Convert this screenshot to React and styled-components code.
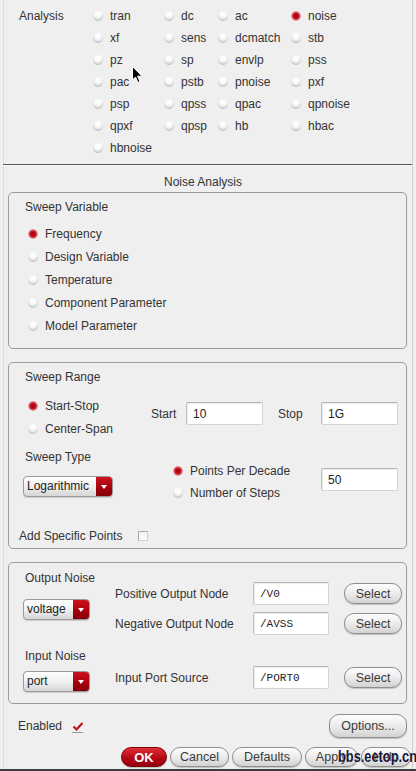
import React from "react";
import styled, { createGlobalStyle, css } from "styled-components";

const Global = createGlobalStyle`
  html, body { margin: 0; padding: 0; background: #efefef; }
  body { font-family: "Liberation Sans", Arial, sans-serif; }
`;

const Window = styled.div`
  position: relative;
  width: 416px;
  height: 771px;
  box-sizing: border-box;
  background: #efefef;
  padding: 0 3px;
  display: flex;
  border-bottom: 2px solid #3c3c3c;
  overflow: hidden;
  color: #333;
  font-size: 12px;
`;

const Frame = styled.div`
  flex: 1;
  border-left: 1px solid #dcdcdc;
  border-right: 1px solid #cfcfcf;
  padding: 0 5px 0 4px;
  display: flex;
  flex-direction: column;
`;

const AnalysisSection = styled.div`
  display: flex;
  padding-top: 5px;
`;

const SectionLabel = styled.div`
  width: 74px;
  margin-left: 11px;
  line-height: 22px;
`;

const RadioGrid = styled.div`
  display: grid;
  grid-template-columns: 71px 54px 73px auto;
  grid-auto-rows: 22px;
`;

const RadioDot = styled.span`
  flex: none;
  width: 10px;
  height: 10px;
  border-radius: 50%;
  box-sizing: border-box;
  ${(p) =>
    p.$checked
      ? css`
          background: radial-gradient(circle at 50% 50%, #a8000c 0, #b80612 30%, #d2404c 50%, #efc6ca 72%, #c4c4c4 100%);
        `
      : css`
          background: radial-gradient(circle at 50% 30%, #ffffff 0, #f8f8f8 38%, #e0e0e0 60%, #b0b0b0 84%, #969696 100%);
        `}
`;

const Option = styled.label`
  display: flex;
  align-items: center;
  gap: 7px;
  height: ${(p) => p.$h || 22}px;
  white-space: nowrap;
  line-height: 16px;
`;

const Divider = styled.div`
  margin: 5px -5px 0 -5px;
  height: 1px;
  background: #555;
  border-bottom: 1px solid #fafafa;
`;

const Title = styled.div`
  margin-top: 8px;
  line-height: 16px;
  text-align: center;
  padding-right: 9px;
`;

const Group = styled.div`
  margin-top: ${(p) => p.$mt}px;
  border: 1px solid #9c9c9c;
  border-radius: 5px;
  padding: ${(p) => p.$pt || 6}px 0 ${(p) => p.$pb}px 16px;
`;

const Legend = styled.div`
  line-height: 16px;
`;

const RadioList = styled.div`
  display: flex;
  flex-direction: column;
  margin-top: ${(p) => p.$mt || 0}px;
  padding-left: ${(p) => p.$pl || 0}px;
  width: ${(p) => (p.$w ? `${p.$w}px` : "auto")};
`;

const RangeRow = styled.div`
  display: flex;
  align-items: flex-start;
  margin-top: 9px;
`;

const RangeRadios = styled.div`
  width: 126px;
  padding-left: 3px;
  box-sizing: border-box;
`;

const FieldGroup = styled.div`
  display: flex;
  align-items: center;
  margin-top: 8px;
`;

const FieldLabel = styled.span`
  width: ${(p) => p.$w}px;
  margin-left: ${(p) => p.$ml || 0}px;
  line-height: 16px;
  white-space: nowrap;
`;

const TextInput = styled.div`
  box-sizing: border-box;
  width: ${(p) => p.$w || 77}px;
  height: 23px;
  margin-top: ${(p) => p.$mt || 0}px;
  background: #fff;
  border: 1px solid #d4d4d4;
  border-top-color: #b4b4b4;
  border-left-color: #c2c2c2;
  border-radius: 2px;
  box-shadow: inset 1px 1px 1px rgba(0, 0, 0, 0.08);
  padding: 0 6px;
  display: flex;
  align-items: center;
  color: #222;
  font-size: ${(p) => (p.$mono ? 11 : 12)}px;
  font-family: ${(p) =>
    p.$mono ? '"Liberation Mono", "Courier New", monospace' : '"Liberation Sans", Arial, sans-serif'};
`;

const TypeRow = styled.div`
  display: flex;
  align-items: flex-start;
  margin-top: 9px;
`;

const TypeLeft = styled.div`
  width: 148px;
  display: flex;
  flex-direction: column;
`;

const Select = styled.div`
  box-sizing: border-box;
  width: ${(p) => p.$w}px;
  height: 21px;
  margin: ${(p) => p.$mt}px 0 0 -2px;
  display: flex;
  border: 1px solid #9a9a9a;
  border-radius: 4px;
  overflow: hidden;
  background: linear-gradient(#fefefe, #f0f0f0 50%, #d6d6d6);
  box-shadow: 0 1px 1px rgba(0, 0, 0, 0.15);
`;

const SelectText = styled.span`
  flex: 1;
  padding-left: 3px;
  line-height: 19px;
  color: #222;
`;

const SelectArrow = styled.span`
  width: 16px;
  background: linear-gradient(#cc1420, #a1000c 60%, #86000a);
  display: flex;
  align-items: center;
  justify-content: center;
  &::after {
    content: "";
    border-left: 3px solid transparent;
    border-right: 3px solid transparent;
    border-top: 4px solid #fff;
  }
`;

const AddRow = styled.div`
  display: flex;
  align-items: center;
  margin: 24px 0 0 -6px;
  line-height: 16px;
`;

const CheckBox = styled.span`
  width: 10px;
  height: 10px;
  margin-left: 16px;
  box-sizing: border-box;
  border: 1px solid #a8a8a8;
  border-bottom-color: #d0d0d0;
  border-right-color: #d0d0d0;
  background: linear-gradient(#f2f2f2, #fdfdfd);
`;

const NoiseSection = styled.div`
  display: flex;
  align-items: flex-start;
  margin-top: ${(p) => p.$mt || 0}px;
`;

const NoiseLeft = styled.div`
  width: 90px;
  display: flex;
  flex-direction: column;
`;

const NodeRows = styled.div`
  display: flex;
  flex-direction: column;
  gap: 7px;
  margin-top: ${(p) => p.$mt}px;
`;

const NodeRow = styled.div`
  display: flex;
  align-items: center;
`;

const Button = styled.div`
  box-sizing: border-box;
  width: ${(p) => p.$w}px;
  height: ${(p) => p.$h || 21}px;
  margin-left: ${(p) => p.$ml || 0}px;
  border: 1px solid #8e8e8e;
  border-radius: 10px;
  display: flex;
  align-items: center;
  justify-content: center;
  font-size: 12.5px;
  color: #3a3a3a;
  background: linear-gradient(#fdfdfd, #ececec 50%, #d2d2d2);
  box-shadow: 0 1px 1px rgba(0, 0, 0, 0.2);
  ${(p) =>
    p.$primary &&
    css`
      border-color: #7c0008;
      background: linear-gradient(#e0303a, #b40812 55%, #960010);
      color: #fff;
      font-weight: bold;
      font-size: 13px;
    `}
`;

const EnabledRow = styled.div`
  display: flex;
  align-items: center;
  margin: 10px 0 0 10px;
  height: 24px;
`;

const EnabledLabel = styled.span`
  line-height: 16px;
`;

const CheckMark = styled.svg`
  margin-left: 10px;
  margin-top: 2px;
`;

const Spacer = styled.div`
  flex: 1;
`;

const ButtonBar = styled.div`
  display: flex;
  justify-content: flex-end;
  gap: 3px;
  margin: 9px -4px 0 0;
`;

const Watermark = styled.div`
  position: absolute;
  left: 338px;
  top: 747px;
  font-family: "Liberation Sans", Arial, sans-serif;
  font-weight: bold;
  font-size: 16px;
  line-height: 20px;
  color: #16163a;
  transform: scaleX(0.8);
  transform-origin: left center;
  white-space: nowrap;
  text-shadow: 0 0 1px #fff;
`;

const Cursor = styled.svg`
  position: absolute;
  left: 132px;
  top: 66px;
`;

const analyses = [
  "tran", "dc", "ac", "noise",
  "xf", "sens", "dcmatch", "stb",
  "pz", "sp", "envlp", "pss",
  "pac", "pstb", "pnoise", "pxf",
  "psp", "qpss", "qpac", "qpnoise",
  "qpxf", "qpsp", "hb", "hbac",
  "hbnoise",
];

const sweepVars = ["Frequency", "Design Variable", "Temperature", "Component Parameter", "Model Parameter"];

function Radio({ checked, children, h }) {
  return (
    <Option $h={h}>
      <RadioDot $checked={checked} />
      {children}
    </Option>
  );
}

export default function App() {
  return (
    <>
      <Global />
      <Window>
        <Frame>
          <AnalysisSection>
            <SectionLabel>Analysis</SectionLabel>
            <RadioGrid>
              {analyses.map((a) => (
                <Radio key={a} checked={a === "noise"}>
                  {a}
                </Radio>
              ))}
            </RadioGrid>
          </AnalysisSection>
          <Divider />
          <Title>Noise Analysis</Title>

          <Group $mt={2} $pb={11}>
            <Legend>Sweep Variable</Legend>
            <RadioList $mt={7} $pl={3}>
              {sweepVars.map((v, i) => (
                <Radio key={v} checked={i === 0} h={23}>
                  {v}
                </Radio>
              ))}
            </RadioList>
          </Group>

          <Group $mt={13} $pb={4}>
            <Legend>Sweep Range</Legend>
            <RangeRow>
              <RangeRadios>
                <Radio checked h={23}>Start-Stop</Radio>
                <Radio h={23}>Center-Span</Radio>
              </RangeRadios>
              <FieldGroup>
                <FieldLabel $w={35}>Start</FieldLabel>
                <TextInput>10</TextInput>
                <FieldLabel $w={43} $ml={15}>Stop</FieldLabel>
                <TextInput>1G</TextInput>
              </FieldGroup>
            </RangeRow>
            <TypeRow>
              <TypeLeft>
                <Legend>Sweep Type</Legend>
                <Select $w={90} $mt={11}>
                  <SelectText>Logarithmic</SelectText>
                  <SelectArrow />
                </Select>
              </TypeLeft>
              <RadioList $mt={11} $w={148}>
                <Radio checked h={22}>Points Per Decade</Radio>
                <Radio h={22}>Number of Steps</Radio>
              </RadioList>
              <TextInput $mt={19}>50</TextInput>
            </TypeRow>
            <AddRow>
              Add Specific Points
              <CheckBox />
            </AddRow>
          </Group>

          <Group $mt={13} $pt={7} $pb={11}>
            <NoiseSection>
              <NoiseLeft>
                <Legend>Output Noise</Legend>
                <Select $w={67} $mt={13}>
                  <SelectText>voltage</SelectText>
                  <SelectArrow />
                </Select>
              </NoiseLeft>
              <NodeRows $mt={12}>
                <NodeRow>
                  <FieldLabel $w={138}>Positive Output Node</FieldLabel>
                  <TextInput $w={76} $mono>/V0</TextInput>
                  <Button $w={58} $ml={15}>Select</Button>
                </NodeRow>
                <NodeRow>
                  <FieldLabel $w={138}>Negative Output Node</FieldLabel>
                  <TextInput $w={76} $mono>/AVSS</TextInput>
                  <Button $w={58} $ml={15}>Select</Button>
                </NodeRow>
              </NodeRows>
            </NoiseSection>
            <NoiseSection $mt={13}>
              <NoiseLeft>
                <Legend>Input Noise</Legend>
                <Select $w={67} $mt={7}>
                  <SelectText>port</SelectText>
                  <SelectArrow />
                </Select>
              </NoiseLeft>
              <NodeRows $mt={18}>
                <NodeRow>
                  <FieldLabel $w={138}>Input Port Source</FieldLabel>
                  <TextInput $w={76} $mono>/PORT0</TextInput>
                  <Button $w={58} $ml={15}>Select</Button>
                </NodeRow>
              </NodeRows>
            </NoiseSection>
          </Group>

          <EnabledRow>
            <EnabledLabel>Enabled</EnabledLabel>
            <CheckMark width="12" height="12" viewBox="0 0 12 12">
              <path d="M1.5 5.5 L4.5 8.5 L10.5 2" fill="none" stroke="#c0101c" strokeWidth="2.2" />
              <line x1="0" y1="11.5" x2="11" y2="11.5" stroke="#9a9a9a" strokeWidth="1" />
            </CheckMark>
            <Spacer />
            <Button $w={78} $h={24}>Options...</Button>
          </EnabledRow>

          <ButtonBar>
            <Button $w={46} $h={20} $primary>OK</Button>
            <Button $w={59} $h={20}>Cancel</Button>
            <Button $w={70} $h={20}>Defaults</Button>
            <Button $w={53} $h={20}>Apply</Button>
            <Button $w={50} $h={20}>Help</Button>
          </ButtonBar>
        </Frame>
        <Cursor width="11" height="18" viewBox="0 0 11 18">
          <path d="M0.5 0.5 L0.5 14 L3.5 11 L6 16.5 L8 15.5 L5.6 10.2 L10 10.2 Z" fill="#000" stroke="#fff" strokeWidth="1" />
        </Cursor>
        <Watermark>bbs.eetop.cn</Watermark>
      </Window>
    </>
  );
}
